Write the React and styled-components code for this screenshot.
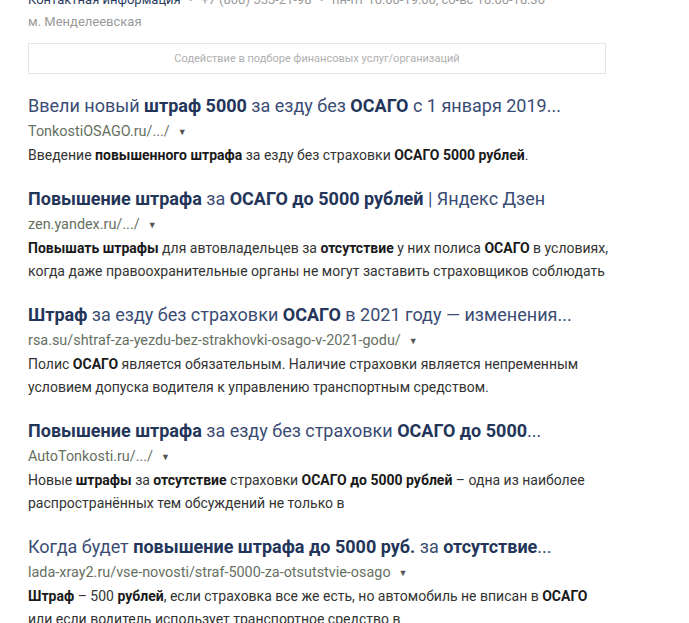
import React from "react";
import styled, { createGlobalStyle } from "styled-components";

const GlobalStyle = createGlobalStyle`
  body {
    margin: 0;
    background: #ffffff;
    font-family: Roboto, "Liberation Sans", Arial, sans-serif;
    overflow: hidden;
  }
`;

const Page = styled.div`
  padding: 0 28px;
  margin-top: -11px;
  width: 578px;
`;

const ContactRow = styled.div`
  font-size: 13px;
  line-height: 22px;
  color: #9a9a9a;
  white-space: nowrap;
`;

const ContactLink = styled.span`
  color: #2c3d62;
`;

const Dot = styled.span`
  margin: 0 8px;
  color: #b5b5b5;
`;

const Metro = styled.div`
  font-size: 13px;
  line-height: 22px;
  color: #9a9a9a;
`;

const Notice = styled.div`
  margin-top: 10px;
  height: 29px;
  border: 1px solid #e6e6e6;
  display: flex;
  align-items: center;
  justify-content: center;
  font-size: 11px;
  color: #b0b0b0;
`;

const Results = styled.div`
  margin-top: 19px;
  display: flex;
  flex-direction: column;
  gap: 19px;
`;

const Result = styled.div`
  display: flex;
  flex-direction: column;
`;

const Title = styled.a`
  font-size: 18px;
  line-height: 26px;
  color: #3a4c74;
  text-decoration: none;
  white-space: nowrap;
  margin-bottom: 1px;

  b {
    color: #24355a;
    font-weight: 700;
  }
`;

const Url = styled.div`
  display: flex;
  align-items: center;
  gap: 8px;
  font-size: 14.4px;
  line-height: 24px;
  color: #66705f;
  white-space: nowrap;
`;

const Caret = styled.span`
  font-size: 9px;
  color: #555;
`;

const Snippet = styled.div`
  font-size: 14px;
  line-height: 23px;
  color: #333;
  white-space: nowrap;

  b {
    color: #1a1a1a;
    font-weight: 700;
  }
`;

const results = [
  {
    title: (
      <>
        Ввели новый <b>штраф 5000</b> за езду без <b>ОСАГО</b> с 1 января 2019...
      </>
    ),
    url: "TonkostiOSAGO.ru/.../",
    snippet: (
      <>
        Введение <b>повышенного штрафа</b> за езду без страховки <b>ОСАГО 5000 рублей</b>.
      </>
    ),
  },
  {
    title: (
      <>
        <b>Повышение штрафа</b> за <b>ОСАГО до 5000 рублей</b> | Яндекс Дзен
      </>
    ),
    url: "zen.yandex.ru/.../",
    snippet: (
      <>
        <b>Повышать штрафы</b> для автовладельцев за <b>отсутствие</b> у них полиса <b>ОСАГО</b> в условиях,
        <br />
        когда даже правоохранительные органы не могут заставить страховщиков соблюдать
      </>
    ),
  },
  {
    title: (
      <>
        <b>Штраф</b> за езду без страховки <b>ОСАГО</b> в 2021 году — изменения...
      </>
    ),
    url: "rsa.su/shtraf-za-yezdu-bez-strakhovki-osago-v-2021-godu/",
    snippet: (
      <>
        Полис <b>ОСАГО</b> является обязательным. Наличие страховки является непременным
        <br />
        условием допуска водителя к управлению транспортным средством.
      </>
    ),
  },
  {
    title: (
      <>
        <b>Повышение штрафа</b> за езду без страховки <b>ОСАГО до 5000</b>...
      </>
    ),
    url: "AutoTonkosti.ru/.../",
    snippet: (
      <>
        Новые <b>штрафы</b> за <b>отсутствие</b> страховки <b>ОСАГО до 5000 рублей</b> – одна из наиболее
        <br />
        распространённых тем обсуждений не только в
      </>
    ),
  },
  {
    title: (
      <>
        Когда будет <b>повышение штрафа до 5000 руб.</b> за <b>отсутствие</b>...
      </>
    ),
    url: "lada-xray2.ru/vse-novosti/straf-5000-za-otsutstvie-osago",
    snippet: (
      <>
        <b>Штраф</b> – 500 <b>рублей</b>, если страховка все же есть, но автомобиль не вписан в <b>ОСАГО</b>
        <br />
        или если водитель использует транспортное средство в
      </>
    ),
  },
];

const App = () => (
  <>
    <GlobalStyle />
    <Page>
      <ContactRow>
        <ContactLink>Контактная информация</ContactLink>
        <Dot>•</Dot>+7 (800) 555-21-98<Dot>•</Dot>пн-пт 10:00-19:00, сб-вс 10:00-18:30
      </ContactRow>
      <Metro>м. Менделеевская</Metro>
      <Notice>Содействие в подборе финансовых услуг/организаций</Notice>
      <Results>
        {results.map((r, i) => (
          <Result key={i}>
            <Title href="#">{r.title}</Title>
            <Url>
              {r.url}
              <Caret>▼</Caret>
            </Url>
            <Snippet>{r.snippet}</Snippet>
          </Result>
        ))}
      </Results>
    </Page>
  </>
);

export default App;
